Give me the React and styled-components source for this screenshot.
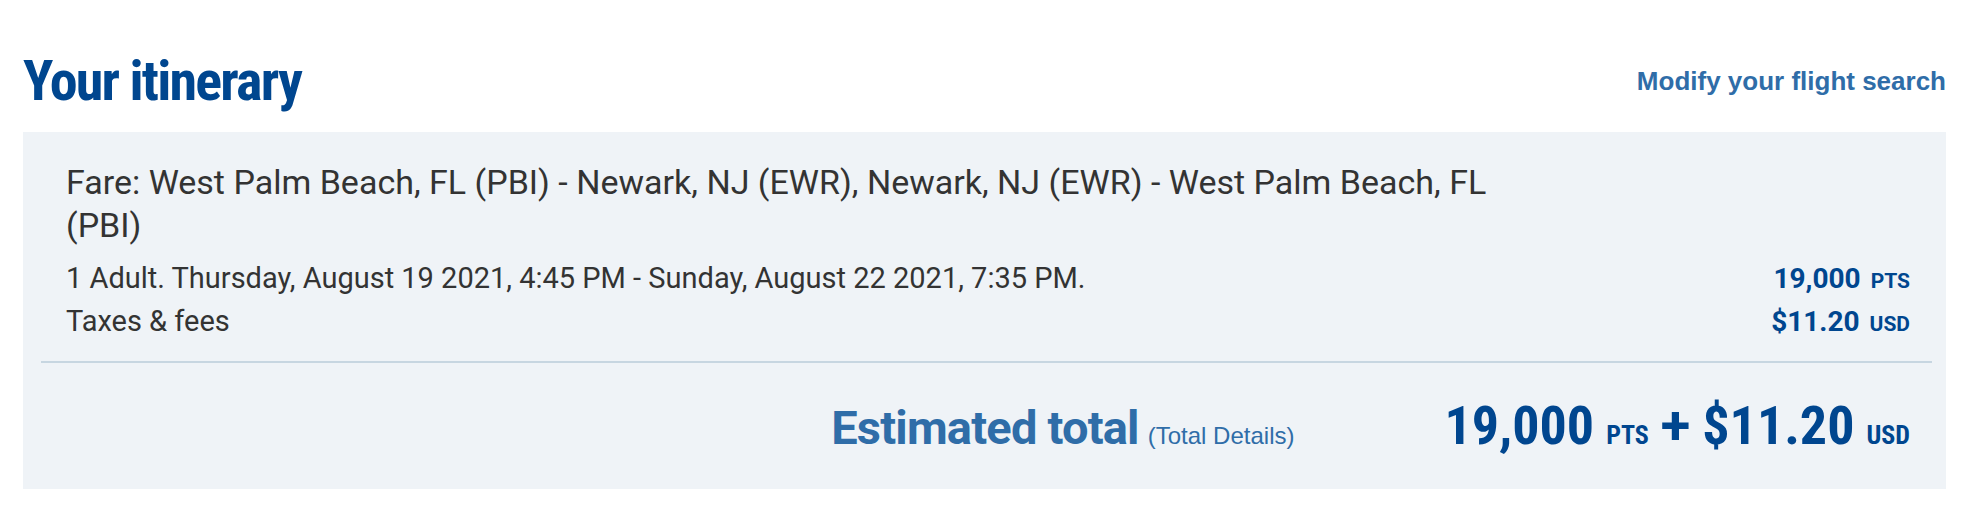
import styled, { createGlobalStyle } from 'styled-components';

const GlobalStyle = createGlobalStyle`
  body {
    margin: 0;
    background: #ffffff;
    font-family: Roboto, "Liberation Sans", sans-serif;
    color: #333333;
  }
`;

const Page = styled.main`
  padding: 51px 20px 0 23px;
`;

const Header = styled.header`
  display: flex;
  align-items: center;
  justify-content: space-between;
  margin-bottom: 21px;
`;

const Title = styled.h1`
  margin: 0;
  font-family: Roboto, sans-serif;
  font-stretch: 75%;
  font-weight: 700;
  font-size: 56px;
  line-height: 60px;
  letter-spacing: -1.8px;
  color: #00468f;
`;

const ModifyLink = styled.a`
  font-family: "Liberation Sans", Arial, sans-serif;
  font-weight: 700;
  font-size: 26px;
  color: #2f6da8;
  text-decoration: none;
  cursor: pointer;
`;

const Panel = styled.section`
  background: #eff3f7;
  padding: 29px 0 34px;
`;

const Details = styled.div`
  padding: 0 36px 0 43px;
`;

const FareTitle = styled.p`
  margin: 0 0 10px;
  max-width: 1450px;
  font-size: 34px;
  line-height: 43px;
  color: #333333;
`;

const LineItem = styled.div`
  display: flex;
  align-items: baseline;
  justify-content: space-between;
  font-size: 29px;
  line-height: 43px;
`;

const Price = styled.span`
  font-weight: 700;
  font-size: 28px;
  line-height: 1;
  color: #00468f;
`;

const Unit = styled.span`
  margin-left: ${p => p.$gap ?? 10}px;
  font-weight: 700;
  font-size: ${p => p.$size || 21}px;
  font-stretch: ${p => p.$stretch || '100%'};
  line-height: 1;
  color: #00468f;
`;

const Divider = styled.hr`
  margin: 18px 14px 0 18px;
  border: 0;
  height: 2px;
  background: #c7d6e1;
`;

const TotalRow = styled.div`
  display: flex;
  align-items: baseline;
  justify-content: flex-end;
  gap: 150px;
  padding: 36px 36px 0 43px;
`;

const TotalLabel = styled.div`
  display: flex;
  align-items: baseline;
  gap: 9px;
`;

const LabelText = styled.span`
  font-weight: 700;
  font-size: 47px;
  font-stretch: 90%;
  letter-spacing: -0.8px;
  line-height: 54px;
  color: #2f6da8;
`;

const DetailsLink = styled.a`
  font-family: "Liberation Sans", Arial, sans-serif;
  font-size: 24px;
  line-height: 1;
  color: #2f6da8;
  cursor: pointer;
`;

const Amount = styled.div`
  display: flex;
  align-items: baseline;
  gap: 12px;
  color: #00468f;
`;

const BigNumber = styled.span`
  font-weight: 700;
  font-size: 54px;
  font-stretch: 80%;
  line-height: 54px;
`;

const Plus = styled(BigNumber)`
  font-stretch: 100%;
`;

export default function App() {
  return (
    <>
      <GlobalStyle />
      <Page>
        <Header>
          <Title>Your itinerary</Title>
          <ModifyLink>Modify your flight search</ModifyLink>
        </Header>
        <Panel>
          <Details>
            <FareTitle>
              Fare: West Palm Beach, FL (PBI) - Newark, NJ (EWR), Newark, NJ (EWR) - West Palm Beach, FL (PBI)
            </FareTitle>
            <LineItem>
              <span>1 Adult. Thursday, August 19 2021, 4:45 PM - Sunday, August 22 2021, 7:35 PM.</span>
              <span>
                <Price>19,000</Price>
                <Unit>PTS</Unit>
              </span>
            </LineItem>
            <LineItem>
              <span>Taxes &amp; fees</span>
              <span>
                <Price>$11.20</Price>
                <Unit>USD</Unit>
              </span>
            </LineItem>
          </Details>
          <Divider />
          <TotalRow>
            <TotalLabel>
              <LabelText>Estimated total</LabelText>
              <DetailsLink>(Total Details)</DetailsLink>
            </TotalLabel>
            <Amount>
              <BigNumber>19,000</BigNumber>
              <Unit $gap={0} $size={26} $stretch="80%">PTS</Unit>
              <Plus>+</Plus>
              <BigNumber>$11.20</BigNumber>
              <Unit $gap={0} $size={26} $stretch="80%">USD</Unit>
            </Amount>
          </TotalRow>
        </Panel>
      </Page>
    </>
  );
}
